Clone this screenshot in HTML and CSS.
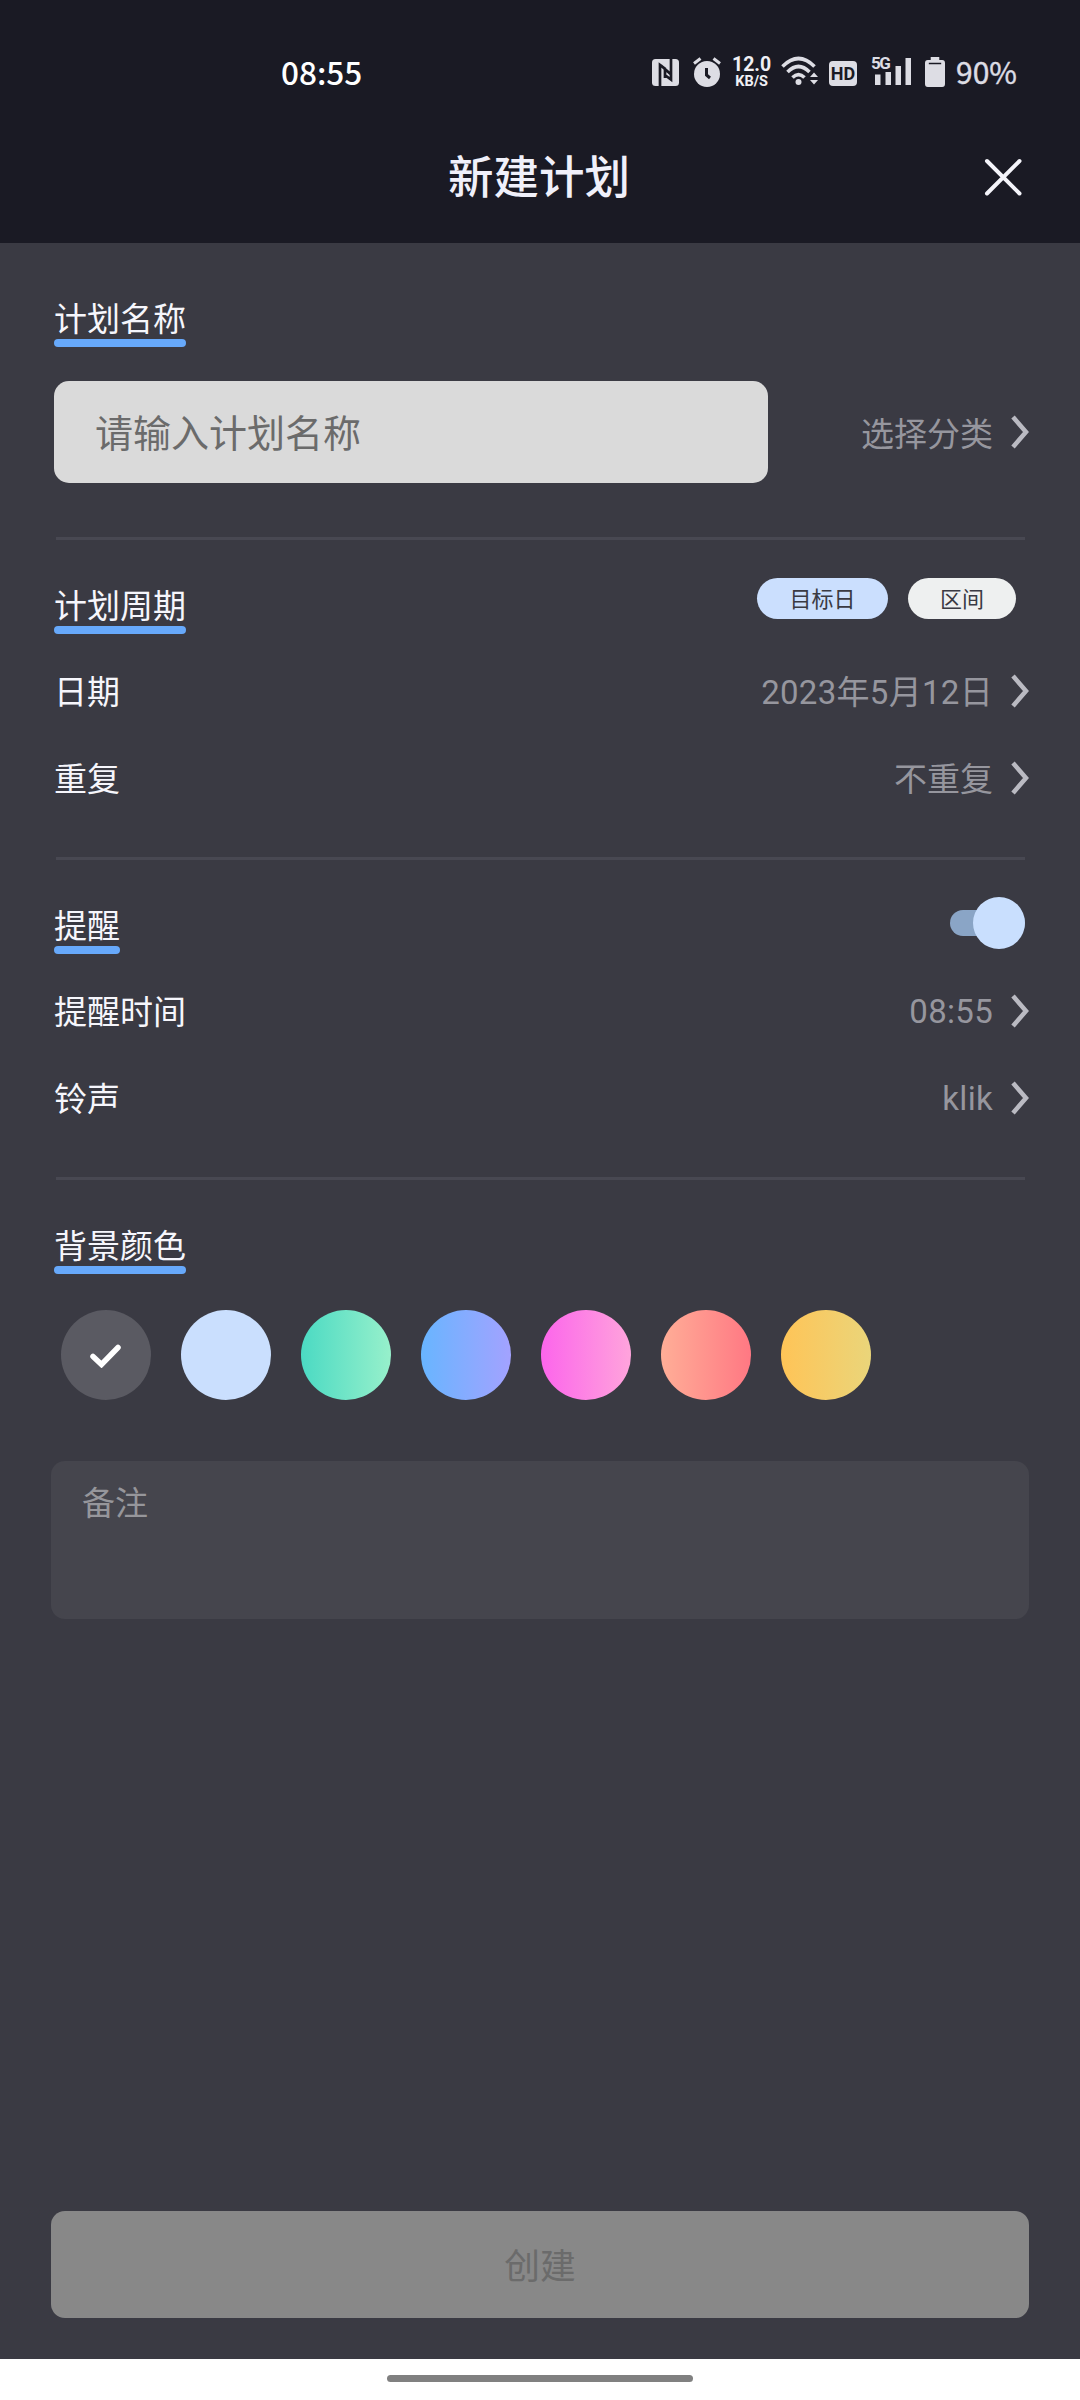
FILE: index.html
```html
<!DOCTYPE html>
<html lang="zh-CN">
<head>
<meta charset="utf-8">
<title>新建计划</title>
<link rel="stylesheet" href="styles.css">
</head>
<body>
<svg class="defs" width="0" height="0" aria-hidden="true">
  <symbol id="chevron" viewBox="0 0 18 34"><path d="M2 2 L15 17 L2 32" fill="none" stroke="currentColor" stroke-width="4.500"/></symbol>
</svg>
<div class="screen">
  <header class="top">
    <div class="status">
      <span class="clock">08:55</span>
      <div class="indicators">
        <svg class="nfc" width="27" height="27" viewBox="0 0 27 27"><rect width="27" height="27" rx="3.500" fill="#dddde4"/><path d="M8 27V6L13.500 10M19 0V20.500L13.500 16.500M9 6.500L18.500 15M13 10V19" fill="none" stroke="#1a1a24" stroke-width="2.700"/></svg>
        <svg class="alarm" width="28" height="30" viewBox="0 0 28 30"><circle cx="14" cy="17" r="13" fill="#dddde4"/><path d="M1 6.500L7.500 1.500M27 6.500L20.500 1.500" stroke="#dddde4" stroke-width="3" /><path d="M13.500 11V18L17 21" fill="none" stroke="#1a1a24" stroke-width="3"/></svg>
        <div class="speed"><span class="rate">12.0</span><span class="unit">KB/S</span></div>
        <svg class="wifi" width="38" height="30" viewBox="0 0 38 30"><g fill="none" stroke="#dddde4" stroke-width="3.600"><path d="M1.500 10.500Q17.500-5.500 33.500 10.500"/><path d="M6.500 16Q17.500 5 28.500 16"/><path d="M11.500 21.500Q17.500 15.500 23.500 21.500"/></g><circle cx="17.500" cy="26" r="3" fill="#dddde4"/><path d="M29 21L33 16.500L37 21ZM29 24L33 28.500L37 24Z" fill="#dddde4"/></svg>
        <span class="hd">HD</span>
        <div class="signal"><svg width="40" height="29" viewBox="0 0 40 29"><path d="M4 17.500H9.500V28H4ZM14.500 15H20V28H14.500ZM24.500 9H30V28H24.500ZM34.500 1H40V28H34.500Z" fill="#dddde4"/></svg><span class="gen">5G</span></div>
        <svg class="battery" width="20" height="30" viewBox="0 0 21 30" preserveAspectRatio="none"><path d="M6 0H15V3H18Q21 3 21 6V27Q21 30 18 30H3Q0 30 0 27V6Q0 3 3 3H6Z" fill="#dddde4"/><path d="M4 6.500H17" stroke="#1a1a24" stroke-width="1.500"/></svg>
        <span class="percent">90%</span>
      </div>
    </div>
    <div class="titlebar">
      <span></span>
      <h1>新建计划</h1>
      <svg class="close" width="38" height="38" viewBox="0 0 38 38"><path d="M3 3L35.500 35.500M35.500 3L3 35.500" stroke="#f4f4fa" stroke-width="4" stroke-linecap="round"/></svg>
    </div>
  </header>

  <main>
    <section class="name">
      <h2>计划名称</h2>
      <div class="namerow">
        <div class="input">请输入计划名称</div>
        <div class="value">选择分类<svg class="chev"><use href="#chevron"/></svg></div>
      </div>
    </section>
    <section>
      <div class="head"><h2>计划周期</h2><div class="pills"><span class="pill on">目标日</span><span class="pill">区间</span></div></div>
      <div class="row"><span class="label">日期</span><div class="value"><span class="date">2023年5月12日</span><svg class="chev"><use href="#chevron"/></svg></div></div>
      <div class="row"><span class="label">重复</span><div class="value"><span class="label">不重复</span><svg class="chev"><use href="#chevron"/></svg></div></div>
    </section>
    <section>
      <div class="head"><h2>提醒</h2><div class="toggle"><span class="thumb"></span></div></div>
      <div class="row"><span class="label">提醒时间</span><div class="value"><span class="latin">08:55</span><svg class="chev"><use href="#chevron"/></svg></div></div>
      <div class="row"><span class="label">铃声</span><div class="value"><span class="latin">klik</span><svg class="chev"><use href="#chevron"/></svg></div></div>
    </section>
    <section class="colors">
      <div class="head"><h2>背景颜色</h2></div>
      <div class="swatches">
        <span class="swatch gray"><svg width="31" height="24" viewBox="0 0 31 24"><path d="M3 12.500L11.500 20.500L28 3.500" fill="none" stroke="#fff" stroke-width="5.500" stroke-linecap="round"/></svg></span>
        <span class="swatch ice"></span>
        <span class="swatch mint"></span>
        <span class="swatch blue"></span>
        <span class="swatch pink"></span>
        <span class="swatch coral"></span>
        <span class="swatch gold"></span>
      </div>
      <div class="note">备注</div>
    </section>
    <div class="create">创建</div>
  </main>
  <footer><span class="home"></span></footer>
</div>
</body>
</html>
```

FILE: styles.css
```css
* { box-sizing: border-box; }
body { margin: 0; background: #3a3a43; font-family: Roboto, "Noto Sans CJK SC", sans-serif; }
h1, h2 { margin: 0; font-weight: 400; }
svg { display: block; flex: none; }
.defs { position: absolute; }
.screen { width: 1080px; height: 2400px; display: flex; flex-direction: column; color: #f6f6fc; }

.top { height: 243px; background: #1a1a24; }
.status { height: 100px; padding: 43px 63px 0 281px; display: flex; justify-content: space-between; align-items: flex-start; }
.clock { font: 500 31.500px/56px "Noto Sans CJK SC", sans-serif; height: 56px; color: #fff; }
.indicators { display: flex; height: 56px; color: #dddde4; }
.nfc { margin: 16px 14px 0 0; }
.alarm { margin: 14px 11px 0 0; }
.speed { width: 39px; margin: 13px 10px 0 0; display: flex; flex-direction: column; align-items: center; font-weight: 700; color: #f0f0f5; }
.rate { font-size: 19.500px; line-height: 18px; }
.unit { font-size: 14.500px; line-height: 15px; }
.wifi { margin: 13px 10px 0 0; }
.hd { width: 28px; height: 25px; margin: 18px 14px 0 0; border-radius: 4px; background: #dddde4; color: #1a1a24; font-size: 18px; font-weight: 700; line-height: 25px; text-align: center; }
.signal { position: relative; width: 40px; margin: 14px 14px 0 0; }
.gen { position: absolute; left: 0; top: -2px; font-size: 17px; letter-spacing: -1.500px; font-weight: 700; line-height: 17px; background: #1a1a24; }
.battery { margin: 14px 11px 0 0; }
.percent { font: 400 30px/56px "Noto Sans CJK SC", sans-serif; -webkit-text-stroke: 0.4px #dddde4; }

.titlebar { height: 143px; padding: 0 58px 0 56px; display: grid; grid-template-columns: 38px 1fr 38px; }
.titlebar h1 { text-align: center; font-size: 45.500px; font-weight: 500; line-height: 68px; padding-top: 45px; color: #f0f0fa; }
.close { margin-top: 58px; }

main { height: 2116px; padding: 0 51px; display: flex; flex-direction: column; }
section { margin: 0 4px 0 3px; height: 320px; border-bottom: 3px solid #484852; border-image: linear-gradient(90deg, transparent 2px, #484852 2px) 0 0 3 0; }
section.name { height: 297px; padding-top: 55px; }
h2 { width: max-content; height: 49px; font-size: 33px; line-height: 43px; color: #f6f6fc; }
h2::after { content: ""; display: block; height: 8px; margin-top: -2px; border-radius: 4px; background: #67a9fb; }
.namerow { display: flex; margin-top: 34px; align-items: center; justify-content: space-between; }
.input { width: 714px; height: 102px; border-radius: 15px; background: #dadada; color: #6b6b6b; font-size: 38px; line-height: 107px; padding-left: 41px; }
.value { display: flex; align-items: center; color: #96969e; font-size: 33px; }
.chev { width: 18px; height: 34px; margin: 0 -4px 0 18px; color: #babac2; }
.head { height: 138px; padding-top: 45px; display: flex; justify-content: space-between; align-items: flex-start; }
.pills { display: flex; gap: 20px; margin: -7px 9px 0 0; }
.pill { width: 108px; height: 41px; border-radius: 21px; background: #eef0f0; color: #3a3a43; font-size: 22px; line-height: 43px; text-align: center; }
.pill.on { width: 131px; background: #cbdffe; }
.row { display: flex; justify-content: space-between; align-items: center; height: 87px; font-size: 33px; margin-top: -31px; }
.row + .row { margin-top: 0; }
.label { padding-bottom: 2px; }
.date { padding-bottom: 2px; letter-spacing: 0.300px; }
.latin { padding-top: 1px; letter-spacing: 0.300px; }
.toggle { width: 75px; height: 26px; margin-top: 5px; border-radius: 13px; background: #8aa5c6; position: relative; }
.thumb { position: absolute; right: 0; top: -13px; width: 52px; height: 52px; border-radius: 50%; background: #c9dffe; }
section.colors { height: 439px; border: 0; }
.colors .head { height: 130px; }
.swatches { display: flex; gap: 30px; padding-left: 7px; }
.swatch { width: 90px; height: 90px; border-radius: 50%; display: flex; align-items: center; justify-content: center; }
.gray { background: #5a5a62; padding: 1px 1px 0 0; }
.ice { background: #cadffe; }
.mint { background: linear-gradient(90deg, #4bdac3, #97f0cb); }
.blue { background: linear-gradient(90deg, #68b5ff, #a3a2ff); }
.pink { background: linear-gradient(90deg, #fc65eb, #ffa4dc); }
.coral { background: linear-gradient(90deg, #ffae97, #ff7883); }
.gold { background: linear-gradient(90deg, #ffc457, #ead57a); }
.note { margin: 61px -4px 0 -3px; height: 158px; border-radius: 14px; background: #45454d; color: #96969b; font-size: 33px; line-height: 49px; padding: 18px 31px; }
.create { margin-top: auto; margin-bottom: 41px; height: 107px; border-radius: 14px; background: #888; color: #6b6b6b; font-size: 35.750px; line-height: 113px; text-align: center; }
footer { height: 41px; background: #fff; display: flex; justify-content: center; padding-top: 16px; }
.home { width: 306px; height: 7px; border-radius: 4px; background: #808080; }
```
